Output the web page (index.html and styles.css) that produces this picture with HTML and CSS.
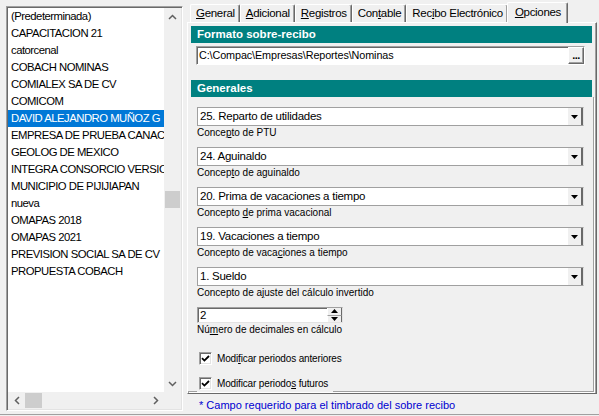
FILE: index.html
```html
<!DOCTYPE html>
<html lang="es">
<head>
<meta charset="utf-8">
<title>Opciones</title>
<link rel="stylesheet" href="styles.css">
</head>
<body>
<div class="app">
  <div class="left">
    <div class="listbox">
      <div class="list-main">
        <ul class="items">
          <li>(Predeterminada)</li>
          <li>CAPACITACION 21</li>
          <li>catorcenal</li>
          <li>COBACH NOMINAS</li>
          <li>COMIALEX SA DE CV</li>
          <li>COMICOM</li>
          <li class="sel">DAVID ALEJANDRO MUÑOZ G</li>
          <li>EMPRESA DE PRUEBA CANAC</li>
          <li>GEOLOG DE MEXICO</li>
          <li>INTEGRA CONSORCIO VERSIO</li>
          <li>MUNICIPIO DE PIJIJIAPAN</li>
          <li>nueva</li>
          <li>OMAPAS 2018</li>
          <li>OMAPAS 2021</li>
          <li>PREVISION SOCIAL SA DE CV</li>
          <li>PROPUESTA COBACH</li>
        </ul>
        <div class="vscroll">
          <div class="sb-btn"><svg width="9" height="6" viewBox="0 0 9 6"><path d="M1 5L4.5 1.5L8 5" fill="none" stroke="#606060" stroke-width="1.5"/></svg></div>
          <div class="vtrack"><div class="vthumb"></div></div>
          <div class="sb-btn"><svg width="9" height="6" viewBox="0 0 9 6"><path d="M1 1L4.5 4.5L8 1" fill="none" stroke="#606060" stroke-width="1.5"/></svg></div>
        </div>
      </div>
      <div class="list-bottom">
        <div class="hscroll">
          <div class="sb-btn"><svg width="6" height="9" viewBox="0 0 6 9"><path d="M5 1L1.5 4.5L5 8" fill="none" stroke="#606060" stroke-width="1.5"/></svg></div>
          <div class="hthumb"></div>
          <div class="htrack"></div>
          <div class="sb-btn"><svg width="6" height="9" viewBox="0 0 6 9"><path d="M1 1L4.5 4.5L1 8" fill="none" stroke="#606060" stroke-width="1.5"/></svg></div>
        </div>
        <div class="corner"></div>
      </div>
    </div>
  </div>

  <div class="right">
    <div class="tabs">
      <div class="tab"><u>G</u>eneral</div>
      <div class="tab"><u>A</u>dicional</div>
      <div class="tab"><u>R</u>egistros</div>
      <div class="tab">Con<u>t</u>able</div>
      <div class="tab">Rec<u>i</u>bo Electrónico</div>
      <div class="tab active"><u>O</u>pciones</div>
    </div>
    <div class="panel">
      <div class="hdr">Formato sobre-recibo</div>
      <div class="pathrow">
        <div class="path">C:\Compac\Empresas\Reportes\Nominas</div>
        <div class="dots">...</div>
      </div>
      <div class="hdr hdr2">Generales</div>
      <div class="group">
        <div class="field">
          <div class="combo"><span class="ctext">25. Reparto de utilidades</span><span class="drop"><svg width="7" height="4" viewBox="0 0 7 4"><path d="M0 0H7L3.5 4Z" fill="#000"/></svg></span></div>
          <div class="lbl">Conce<u>p</u>to de PTU</div>
        </div>
        <div class="field">
          <div class="combo"><span class="ctext">24. Aguinaldo</span><span class="drop"><svg width="7" height="4" viewBox="0 0 7 4"><path d="M0 0H7L3.5 4Z" fill="#000"/></svg></span></div>
          <div class="lbl">Concep<u>t</u>o de aguinaldo</div>
        </div>
        <div class="field">
          <div class="combo"><span class="ctext">20. Prima de vacaciones a tiempo</span><span class="drop"><svg width="7" height="4" viewBox="0 0 7 4"><path d="M0 0H7L3.5 4Z" fill="#000"/></svg></span></div>
          <div class="lbl">Concepto <u>d</u>e prima vacacional</div>
        </div>
        <div class="field">
          <div class="combo"><span class="ctext">19. Vacaciones a tiempo</span><span class="drop"><svg width="7" height="4" viewBox="0 0 7 4"><path d="M0 0H7L3.5 4Z" fill="#000"/></svg></span></div>
          <div class="lbl">Concepto de vaca<u>c</u>iones a tiempo</div>
        </div>
        <div class="field">
          <div class="combo"><span class="ctext">1. Sueldo</span><span class="drop"><svg width="7" height="4" viewBox="0 0 7 4"><path d="M0 0H7L3.5 4Z" fill="#000"/></svg></span></div>
          <div class="lbl">Concepto de a<u>j</u>uste del cálculo invertido</div>
        </div>
        <div class="field spinfield">
          <div class="spin">
            <span class="stext">2</span>
            <span class="sbtns">
              <span class="sbtn"><svg width="7" height="4" viewBox="0 0 7 4"><path d="M0 4H7L3.5 0Z" fill="#000"/></svg></span>
              <span class="sbtn"><svg width="7" height="4" viewBox="0 0 7 4"><path d="M0 0H7L3.5 4Z" fill="#000"/></svg></span>
            </span>
          </div>
          <div class="lbl">Nú<u>m</u>ero de decimales en cálculo</div>
        </div>
        <div class="check first">
          <span class="box"><svg width="9" height="9" viewBox="0 0 9 9"><path d="M1 4.2L3.4 6.6L8 2" fill="none" stroke="#000" stroke-width="1.8"/></svg></span>
          <span>Modi<u>f</u>icar periodos anteriores</span>
        </div>
        <div class="check">
          <span class="box"><svg width="9" height="9" viewBox="0 0 9 9"><path d="M1 4.2L3.4 6.6L8 2" fill="none" stroke="#000" stroke-width="1.8"/></svg></span>
          <span>Modificar periodo<u>s</u> futuros</span>
        </div>
      </div>
    </div>
    <div class="status">* Campo requerido para el timbrado del sobre recibo</div>
  </div>
</div>
</body>
</html>
```

FILE: styles.css
```css
* { box-sizing: border-box; margin: 0; padding: 0; }
html, body { width: 599px; height: 416px; overflow: hidden; background: #f0f0f0; }
body { font-family: "Liberation Sans", Arial, sans-serif; color: #000; }
u { text-decoration: underline; text-underline-offset: 1px; }

.app { display: flex; width: 599px; height: 415px; border-bottom: 1px solid #a0a0a0; }

/* left list */
.left { flex: none; width: 187px; padding: 6px 4px 3px 6px; display: flex; }
.listbox {
  flex: 1; min-width: 0; display: flex; flex-direction: column;
  border: 1px solid; border-color: #a0a0a0 #fff #fff #a0a0a0;
  box-shadow: inset 1px 1px 0 #696969, inset -1px -1px 0 #e3e3e3;
  padding: 1px;
}
.list-main { flex: 1; display: flex; min-height: 0; min-width: 0; }
.items {
  list-style: none; flex: 1; min-width: 0; background: #fff; overflow: hidden;
  font-size: 11.3px; letter-spacing: -0.5px;
}
.items li { height: 17px; line-height: 17px; padding-left: 3px; white-space: nowrap; overflow: hidden; }
.items li.sel { background: #0078d7; color: #fff; }
.vscroll { flex: none; width: 17px; display: flex; flex-direction: column; background: #f0f0f0; }
.sb-btn { width: 17px; height: 17px; display: flex; align-items: center; justify-content: center; flex: none; }
.vtrack { flex: 1; }
.vthumb { height: 17px; margin: 166px 1px 0; background: #cdcdcd; }
.list-bottom { flex: none; height: 17px; display: flex; }
.hscroll { flex: 1; min-width: 0; display: flex; background: #f0f0f0; }
.hthumb { flex: none; width: 17px; margin: 1px 0; background: #cdcdcd; }
.htrack { flex: 1; }
.corner { flex: none; width: 17px; background: #f0f0f0; }

/* right side */
.right { flex: 1; min-width: 0; display: flex; flex-direction: column; padding-right: 2px; }
.tabs { flex: none; height: 22px; display: flex; align-items: flex-end; padding-left: 3px; position: relative; z-index: 1; }
.tab {
  height: 18px; line-height: 17px; padding: 0 4px 0 5px;
  font-size: 11.5px; letter-spacing: -0.3px;
  border-top: 1px solid #fff; border-left: 1px solid #fff; border-right: 1px solid #696969;
  box-shadow: inset -1px 0 0 #a0a0a0;
  border-radius: 2px 2px 0 0; background: #f0f0f0; white-space: nowrap;
}
.tab.active { height: 21px; margin: 0 -1px -1px -1px; padding: 0 6px 0 7px; line-height: 19px; }

.panel {
  flex: 1; display: flex; flex-direction: column; min-height: 0;
  border: 1px solid; border-color: #fff #696969 #696969 #fff;
  box-shadow: inset -1px -1px 0 #a0a0a0;
  padding: 3px 2px 1px 0;
}
.hdr {
  flex: none; height: 17px; line-height: 17px; margin: 0 2px 0 3px; padding-left: 6px;
  background: #008080; color: #fff; font-weight: bold; font-size: 11.5px;
}
.hdr2 { margin-top: 15px; }
.pathrow {
  flex: none; height: 19px; margin: 3px 9px 0 8px; display: flex; background: #fff;
  border: 1px solid; border-color: #a0a0a0 #fff #fff #a0a0a0;
  box-shadow: inset 1px 1px 0 #696969;
}
.path {
  flex: 1; padding-left: 2px; line-height: 17px; white-space: nowrap; overflow: hidden;
  font-size: 10.8px; letter-spacing: -0.1px;
}
.dots {
  width: 16px; background: #f0f0f0; font-weight: bold; font-size: 11px; text-align: center; line-height: 15px;
  border: 1px solid; border-color: #fff #696969 #696969 #fff; box-shadow: inset -1px -1px 0 #a0a0a0;
  letter-spacing: -0.5px;
}

.group {
  flex: 1; min-height: 0; display: flex; flex-direction: column;
  padding: 10px 9px 0 9px;
  border-right: 1px solid #a0a0a0; border-bottom: 1px solid #a0a0a0;
  box-shadow: 1px 1px 0 #fff;
}
.field { flex: none; display: flex; flex-direction: column; margin-bottom: 8px; }
.combo {
  height: 19px; display: flex; background: #fff;
  border-top: 1px solid #a0a0a0; border-left: 1px solid #a0a0a0; border-bottom: 1px solid #a0a0a0;
  border-right: 1px solid #e3e3e3;
}
.ctext { flex: 1; padding-left: 2px; line-height: 17px; white-space: nowrap; font-size: 11.5px; letter-spacing: -0.25px; }
.drop {
  width: 16px; display: flex; align-items: center; justify-content: center; background: #f0f0f0;
  border-left: 1px solid #fff; border-right: 2px solid #696969;
}
.lbl { font-size: 10px; line-height: 13px; white-space: nowrap; }

.spinfield { margin-bottom: 14px; }
.spin {
  width: 146px; height: 16px; display: flex; background: #fff;
  border: 1px solid; border-color: #a0a0a0 #e3e3e3 #e3e3e3 #a0a0a0;
  box-shadow: inset 1px 1px 0 #696969;
}
.stext { flex: 1; padding-left: 2px; line-height: 14px; font-size: 11.5px; }
.sbtns { width: 15px; display: flex; flex-direction: column; }
.sbtn {
  flex: 1; display: flex; align-items: center; justify-content: center; background: #f0f0f0;
  border-left: 1px solid #fff; border-right: 1px solid #696969;
}
.sbtn:first-child { border-bottom: 1px solid #a0a0a0; }

.check {
  flex: none; width: 136px; height: 17px; display: flex; align-items: center; gap: 5px; padding-left: 2px;
  background: #f0f0f0; white-space: nowrap; font-size: 10px; letter-spacing: -0.15px;
}
.check + .check { margin-top: 8px; }
.box {
  width: 13px; height: 13px; flex: none; background: #fff; display: flex; align-items: center; justify-content: center;
  border: 1px solid; border-color: #a0a0a0 #fff #fff #a0a0a0;
  box-shadow: inset 1px 1px 0 #696969, inset -1px -1px 0 #e3e3e3;
}

.status {
  flex: none; height: 20px; padding: 3px 0 0 12px; line-height: 17px;
  font-size: 11px; color: #0000d0; white-space: nowrap;
}
```
